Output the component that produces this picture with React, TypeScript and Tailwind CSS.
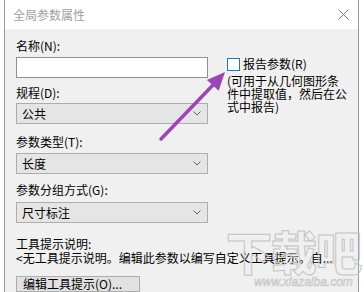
import React from "react";

const Chevron = () => (
  <svg width="8" height="5" viewBox="0 0 8 5" className="shrink-0">
    <path d="M0.5 0.5 L4 4 L7.5 0.5" fill="none" stroke="#606060" strokeWidth="1" />
  </svg>
);

const Select = ({ value }: { value: string }) => (
  <div className="h-[21px] border border-[#acacac] bg-[#e5e5e5] flex items-center justify-between pl-[5px] pr-[6px]">
    <span className="leading-[14px]">{value}</span>
    <Chevron />
  </div>
);

export default function App() {
  return (
    <div
      className="w-[364px] h-[292px] relative overflow-hidden bg-white flex text-[12px] text-black"
      style={{ fontFamily: '"Noto Sans CJK SC", "Noto Sans", sans-serif' }}
    >
      <div className="w-[4px] shrink-0 bg-white" />
      <div className="w-[355px] shrink-0 flex flex-col border-l border-r border-[#9a9a9a]">
        <div className="h-[29px] bg-white flex items-center justify-between pl-[8px] pr-[9px]">
          <span className="leading-[14px] text-[#a0a0a0]">全局参数属性</span>
          <svg width="11" height="11" viewBox="0 0 11 11">
            <path d="M0.5 0.5 L10.5 10.5 M10.5 0.5 L0.5 10.5" stroke="#7a7a7a" strokeWidth="1" />
          </svg>
        </div>
        <div className="flex-1 bg-[#f0f0f0] flex pl-[11px]">
          <div className="w-[192px] shrink-0 flex flex-col pt-[10px]">
            <div className="leading-[14px]">名称(N):</div>
            <div className="mt-[4px] h-[21px] border border-[#8f8f8f] bg-white" />
            <div className="mt-[8px] leading-[14px]">规程(D):</div>
            <div className="mt-[3px]">
              <Select value="公共" />
            </div>
            <div className="mt-[11px] leading-[14px]">参数类型(T):</div>
            <div className="mt-[4px]">
              <Select value="长度" />
            </div>
            <div className="mt-[9px] leading-[14px]">参数分组方式(G):</div>
            <div className="mt-[5px]">
              <Select value="尺寸标注" />
            </div>
            <div className="mt-[14px] leading-[14px]">工具提示说明:</div>
            <div className="leading-[14px] whitespace-nowrap">
              &lt;无工具提示说明。编辑此参数以编写自定义工具提示。自...
            </div>
            <div className="mt-[11px] w-[124px] h-[16px] border border-[#adadad] bg-[#e1e1e1] flex items-center pl-[6px]">
              <span className="leading-[14px]">编辑工具提示(O)...</span>
            </div>
          </div>
          <div className="ml-[19px] flex flex-col pt-[28px]">
            <div className="flex items-center leading-[14px]">
              <div className="w-[13px] h-[13px] border border-[#3a6f96] bg-white shrink-0" />
              <span className="ml-[3px]">报告参数(R)</span>
            </div>
            <div className="mt-[3px] leading-[13px] whitespace-nowrap">
              (可用于从几何图形条
              <br />
              件中提取值，然后在公
              <br />
              式中报告)
            </div>
          </div>
        </div>
      </div>
      <div className="flex-1 bg-white" />

      {/* watermark */}
      <div className="absolute left-[226px] top-[222px] pointer-events-none flex flex-col items-center">
        <div
          className="text-[46px] leading-[56px] font-black text-transparent tracking-[-1px] [-webkit-text-stroke:1px_#c4c4c4]"
          style={{ fontFamily: '"Noto Sans CJK SC", sans-serif' }}
        >
          下载吧
        </div>
        <div
          className="-mt-[2px] ml-[20px] text-[12px] leading-[13px] italic text-transparent [-webkit-text-stroke:0.6px_#c4c4c4]"
          style={{ fontFamily: '"Liberation Sans", sans-serif' }}
        >
          www.xiazaiba.com
        </div>
      </div>

      {/* arrow annotation */}
      <svg className="absolute left-0 top-0 pointer-events-none" width="364" height="292" viewBox="0 0 364 292">
        <line x1="161" y1="139" x2="214" y2="84" stroke="#9b45b8" strokeWidth="3.5" strokeLinecap="round" />
        <polygon points="225,72 218.7,90.7 206.9,79.9" fill="#9b45b8" />
      </svg>
    </div>
  );
}
